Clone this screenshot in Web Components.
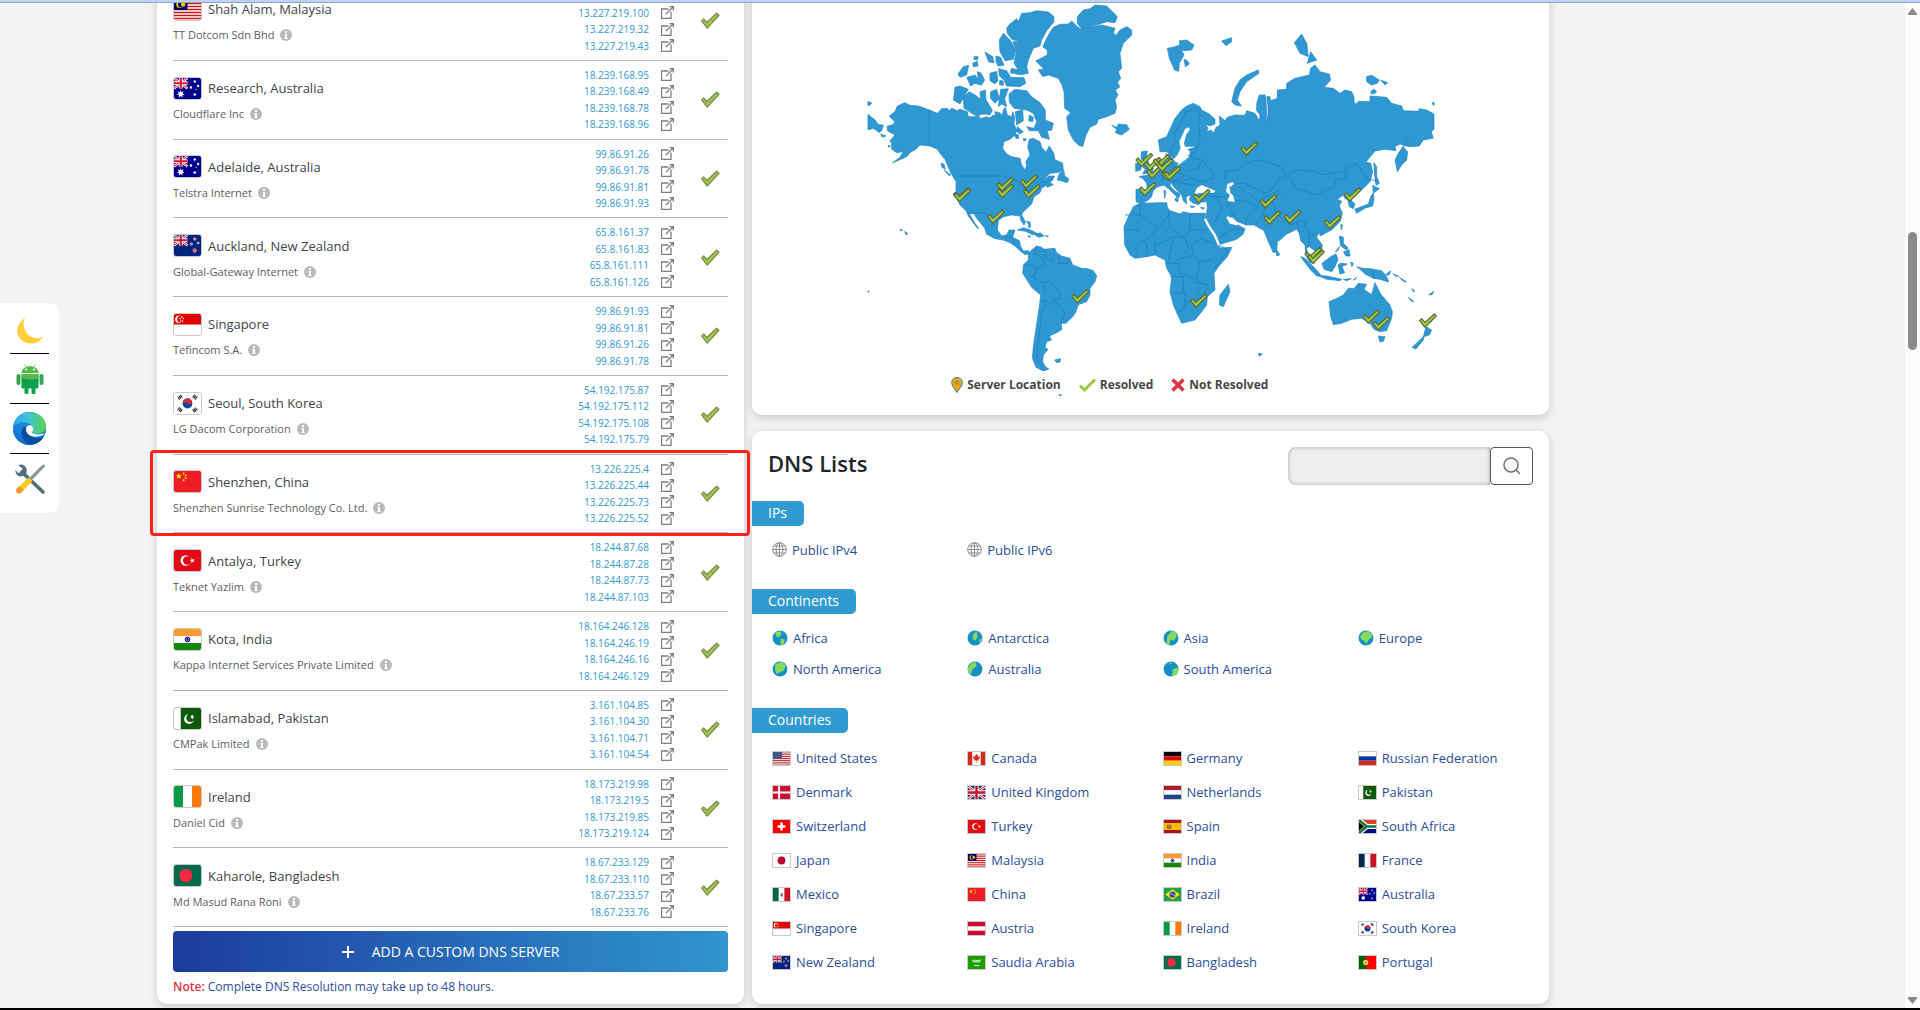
<!DOCTYPE html>
<html lang="en">
<head>
<meta charset="utf-8">
<title>DNS Checker</title>
<style>
html,body{margin:0;height:100%}
body{font-family:"Open Sans","Segoe UI",sans-serif;font-size:13px;color:#3f444a;background:#f3f3f3;overflow:hidden;
--accent:#2f9bd0;--link:#2a4f9b}
</style>
</head>
<body>
<app-frame>
  <tool-dock slot="dock"></tool-dock>
  <app-card class="servers" slot="left" cut><server-list></server-list></app-card>
  <app-card slot="right" cut><world-map></world-map><map-legend></map-legend></app-card>
  <app-card slot="right"><dns-lists></dns-lists></app-card>
</app-frame>
<script>
const F = {
  my:'<rect width="28" height="21" fill="#fff"/><path d="M0 1.5h28M0 4.5h28M0 7.5h28M0 10.5h28M0 13.5h28M0 16.5h28M0 19.5h28" stroke="#cc1414" stroke-width="1.6"/><rect width="14" height="11" fill="#010066"/><circle cx="6" cy="5.500" r="3.600" fill="#fc0"/><circle cx="7.200" cy="5.500" r="2.900" fill="#010066"/><circle cx="9.500" cy="5.500" r="2.200" fill="#fc0"/>',
  au:'<rect width="28" height="21" fill="#00008b"/><path d="M0 0l14 10.500M14 0L0 10.500" stroke="#fff" stroke-width="2.400"/><path d="M0 0l14 10.500M14 0L0 10.500" stroke="#e8112d"/><path d="M7 0v10.500M0 5.250h14" stroke="#fff" stroke-width="4"/><path d="M7 0v10.500M0 5.250h14" stroke="#e8112d" stroke-width="2.200"/><path d="M7 12l.8 2.200 2.200-.9-1 2.200 2 1-2.200.6.2 2.300-2-1.400-2 1.400.2-2.300L3 16.500l2-1-1-2.200 2.200.9z" fill="#fff"/><g fill="#fff"><circle cx="21.500" cy="3.500" r="1.200"/><circle cx="17.500" cy="9.500" r="1.200"/><circle cx="25" cy="8" r="1.200"/><circle cx="21.500" cy="16.500" r="1.300"/><circle cx="23" cy="11.500" r=".6"/></g>',
  nz:'<rect width="28" height="21" fill="#00247d"/><path d="M0 0l14 10.500M14 0L0 10.500" stroke="#fff" stroke-width="2.400"/><path d="M0 0l14 10.500M14 0L0 10.500" stroke="#cc142b"/><path d="M7 0v10.500M0 5.250h14" stroke="#fff" stroke-width="4"/><path d="M7 0v10.500M0 5.250h14" stroke="#cc142b" stroke-width="2.200"/><g fill="#e33a4d" stroke="#fff" stroke-width=".6"><circle cx="21.500" cy="4" r="1.200"/><circle cx="18" cy="9" r="1.200"/><circle cx="25" cy="8" r="1.100"/><circle cx="21.500" cy="15.500" r="1.700"/></g>',
  sg:'<rect width="28" height="21" fill="#fff"/><rect width="28" height="10.500" fill="#e00000"/><circle cx="5" cy="5.200" r="3.800" fill="#fff"/><circle cx="6.600" cy="5.200" r="3.300" fill="#e00000"/><g fill="#fff"><circle cx="8" cy="3" r=".8"/><circle cx="9.800" cy="4.500" r=".8"/><circle cx="6.400" cy="4.500" r=".8"/><circle cx="7" cy="7" r=".8"/><circle cx="9" cy="7" r=".8"/></g>',
  kr:'<rect width="28" height="21" fill="#fff"/><circle cx="14" cy="10.500" r="5" fill="#0047a0"/><path d="M9 10.500a5 5 0 0 1 9.800-1.500c-1 3-3.800 3.200-5 1.500-1.300-1.500-3.800-.8-4.800 0z" fill="#cd2e3a"/><g stroke="#222" stroke-width="3.600" stroke-dasharray="1.100 .5"><path d="M4.500 5.500l3.600-2.700M20 2.800l3.600 2.700M4.500 15.500l3.600 2.700M20 18.200l3.600-2.700"/></g>',
  cn:'<rect width="28" height="21" fill="#ee1c25"/><path d="M5 2l.8 2.300h2.400L6.300 5.700 7 8 5 6.600 3 8l.7-2.300L1.800 4.300h2.400z" fill="#ff0"/><g fill="#ff0"><circle cx="10" cy="2.500" r=".9"/><circle cx="12.200" cy="4.500" r=".9"/><circle cx="12.200" cy="7.200" r=".9"/><circle cx="10" cy="9.200" r=".9"/></g>',
  tr:'<rect width="28" height="21" fill="#e30a17"/><circle cx="12" cy="10.500" r="5.200" fill="#fff"/><circle cx="13.500" cy="10.500" r="4.200" fill="#e30a17"/><path d="M16 10.500l2-.6.1-2.100 1.200 1.700 2-.7-1.200 1.700 1.200 1.700-2-.7-1.200 1.700-.1-2.100z" fill="#fff"/>',
  in:'<rect width="28" height="21" fill="#fff"/><rect width="28" height="7" fill="#f93"/><rect y="14" width="28" height="7" fill="#138808"/><circle cx="14" cy="10.500" r="2.400" fill="#7a7ad0" stroke="#000088"/><circle cx="14" cy="10.500" r=".9" fill="#000088"/>',
  pk:'<rect width="28" height="21" fill="#0c590b"/><rect width="7" height="21" fill="#fff"/><circle cx="15.500" cy="11" r="5" fill="#fff"/><circle cx="17" cy="9.800" r="4.300" fill="#0c590b"/><path d="M17 7l1.500.8 1.300-1.300.1 1.900 1.500.8-1.700.5-.2 1.800-1-1.600-1.700.3 1.100-1.400z" fill="#fff"/>',
  ie:'<rect width="28" height="21" fill="#fff"/><rect width="9.300" height="21" fill="#009a49"/><rect x="18.700" width="9.300" height="21" fill="#ff7900"/>',
  bd:'<rect width="28" height="21" fill="#006a4e"/><circle cx="12.300" cy="10.500" r="6.700" fill="#f42a41"/>',
  us:'<rect width="28" height="21" fill="#fff"/><path d="M0 1.500h28M0 4.500h28M0 7.500h28M0 10.500h28M0 13.500h28M0 16.500h28M0 19.500h28" stroke="#bd3d44" stroke-width="1.700"/><rect width="15" height="10.500" fill="#3a4f80"/><path d="M1 2h13M1 5h13M1 8h13" stroke="#7d8cb2" stroke-dasharray="1 1.400"/>',
  ca:'<rect width="28" height="21" fill="#fff"/><path d="M0 0h7v21H0zM21 0h7v21h-7z" fill="#d52b1e"/><path d="M14 3l1.500 2.500 1.500-.5-.5 3.500 3-1.500.3 1.800-2.600 3.700.6 1.200-3.300-.2V17h-1v-3.500l-3.300.2.600-1.200-2.600-3.700.3-1.800 3 1.500L11 5l1.500.5z" fill="#d52b1e"/>',
  de:'<rect width="28" height="7" fill="#000"/><rect y="7" width="28" height="7" fill="#d00"/><rect y="14" width="28" height="7" fill="#ffce00"/>',
  ru:'<rect width="28" height="7" fill="#fff"/><rect y="7" width="28" height="7" fill="#0039a6"/><rect y="14" width="28" height="7" fill="#d52b1e"/>',
  dk:'<rect width="28" height="21" fill="#c8102e"/><path d="M10 0v21M0 10.500h28" stroke="#fff" stroke-width="3"/>',
  gb:'<rect width="28" height="21" fill="#012169"/><path d="M0 0l28 21M28 0L0 21" stroke="#fff" stroke-width="4.500"/><path d="M0 0l28 21M28 0L0 21" stroke="#c8102e" stroke-width="1.600"/><path d="M14 0v21M0 10.500h28" stroke="#fff" stroke-width="7"/><path d="M14 0v21M0 10.500h28" stroke="#c8102e" stroke-width="4"/>',
  nl:'<rect width="28" height="7" fill="#ae1c28"/><rect y="7" width="28" height="7" fill="#fff"/><rect y="14" width="28" height="7" fill="#21468b"/>',
  ch:'<rect width="28" height="21" fill="#f00"/><path d="M14 4v13M7.500 10.500h13" stroke="#fff" stroke-width="4"/>',
  es:'<rect width="28" height="21" fill="#f1bf00"/><path d="M0 0h28v5H0zM0 16h28v5H0z" fill="#aa151b"/><rect x="5" y="7.500" width="7" height="6.500" rx="1.500" fill="#ad4a24"/><rect x="7" y="9" width="3" height="3" fill="#c98a86"/>',
  za:'<rect width="28" height="10.500" fill="#e23d28"/><rect y="10.500" width="28" height="10.500" fill="#000c8a"/><path d="M0 0l13 10.500L0 21M13 10.500h15" fill="none" stroke="#fff" stroke-width="8"/><path d="M0 0v21l12-10.500z" fill="#ffb915"/><path d="M0 3.500v14l8-7z" fill="#000"/><path d="M0 0l13 10.500L0 21M12 10.500h16" fill="none" stroke="#007847" stroke-width="4"/>',
  jp:'<rect width="28" height="21" fill="#fff"/><circle cx="14" cy="10.500" r="6.300" fill="#bc002d"/>',
  fr:'<rect width="28" height="21" fill="#fff"/><rect width="9.300" height="21" fill="#002654"/><rect x="18.700" width="9.300" height="21" fill="#ce1126"/>',
  mx:'<rect width="28" height="21" fill="#fff"/><rect width="9.300" height="21" fill="#006847"/><rect x="18.700" width="9.300" height="21" fill="#ce1126"/><path d="M12 12l2-4 2.500 1-.5 4-2 1.500z" fill="#8a6a35"/>',
  br:'<rect width="28" height="21" fill="#229e45"/><path d="M14 2l12 8.500L14 19 2 10.500z" fill="#f8e509"/><circle cx="14" cy="10.500" r="5" fill="#2b49a3"/><path d="M9.500 9q5 0 9 4" fill="none" stroke="#fff"/>',
  at:'<rect width="28" height="21" fill="#c8102e"/><rect y="7" width="28" height="7" fill="#fff"/>',
  sa:'<rect width="28" height="21" fill="#199d00"/><path d="M7 6.500l2 2 1.500-2.500 2 2.500 1.500-2 1.500 2 2-2.500 1.500 2.500 2-2.500M8 9.500h12M10 15.500h9" stroke="#fff" stroke-width="1.400" fill="none"/>',
  pt:'<rect width="28" height="21" fill="#f00"/><rect width="11.200" height="21" fill="#060"/><circle cx="11" cy="10.500" r="4.300" fill="#f4d21c"/><circle cx="11" cy="10.500" r="2.200" fill="#e23b3b" stroke="#fff"/>'
};
const CHECK = w => `<svg class="check" width="${w}" height="${Math.round(w*.8)}" viewBox="-26 -21 52 42" aria-hidden="true"><path d="M-22 1l5-5 8 9 24-23 6 5L-8 19z" fill="#9fc64c" stroke="#7d8a4e" stroke-width="3" stroke-linejoin="round"/></svg>`;

class Base extends HTMLElement{
  connectedCallback(){
    if(this.shadowRoot) return;
    const t=document.createElement('template');
    t.innerHTML=this.render();
    this.attachShadow({mode:'open'}).append(t.content.cloneNode(true));
  }
}

customElements.define('app-frame', class extends Base{render(){return `<style>
:host{display:flex;flex-direction:column;height:100vh}
.edge{flex:none;height:2px;background:#bfd4f4;border-bottom:1px solid #8fa5c4}
.view{flex:1;min-height:0;display:flex;overflow:hidden;border-bottom:2px solid #000;background:#f3f3f3}
.page{flex:1;min-width:0;overflow:hidden}
main{display:grid;grid-template-columns:587fr 797fr;gap:8px;margin:-21px 356px 0 157px}
.right{display:flex;flex-direction:column;gap:16px;min-width:0}
.left{display:flex;flex-direction:column;min-width:0}
.left ::slotted(*){flex:1}
.bar{flex:none;width:15px;background:#fcfcfc;display:flex;flex-direction:column;align-items:center;padding:5px 0 4px;box-sizing:border-box}
.thumb{width:9px;height:118px;border-radius:5px;background:#8b8b8b}
.before{flex:217}.after{flex:647}
</style><div class="edge"></div><div class="view"><div class="page"><main><div class="left"><slot name="left"></slot></div><div class="right"><slot name="right"></slot></div></main></div>
<div class="bar" aria-hidden="true"><svg width="9" height="7"><path d="M4.500 0L9 5.500V7H0V5.500z" fill="#8b8b8b"/></svg><div class="before"></div><div class="thumb"></div><div class="after"></div><svg width="9" height="7"><path d="M4.500 7L9 1.500V0H0v1.500z" fill="#8b8b8b"/></svg></div></div><slot name="dock"></slot>`}});

customElements.define('tool-dock', class extends Base{render(){return `<style>
:host{position:fixed;left:0;top:30%}
nav{width:59px;box-sizing:border-box;padding:1px 10px 9px;background:#fff;border-radius:0 10px 10px 0}
button,a{display:flex;align-items:center;justify-content:center;width:100%;height:50px;box-sizing:border-box;padding:0;border:0;border-bottom:1px solid #000;background:none}
nav>:last-child{border-bottom:0}
svg{display:block}
</style><nav aria-label="Tools">
<button aria-label="Dark mode"><svg width="26" height="30" viewBox="0 -4 26 30"><path d="M8 0C0 5-2 14 3 20.500 9 28 21 27 26 19 19 22 12 19 9 14 6 9 6 4 8 0z" fill="#ffcf3a"/></svg></button>
<a href="#" aria-label="Android app"><svg width="28" height="30" viewBox="0 0 28 30"><path d="M8.500.5l2 3M19.500.5l-2 3" stroke="#7cc576"/><path d="M5.500 9C5.500 0 22.500 0 22.500 9z" fill="#55b949"/><circle cx="10" cy="5.500" r="1" fill="#fff"/><circle cx="18" cy="5.500" r="1" fill="#fff"/><path d="M5.500 10h17v13q0 1.500-1.500 1.500H7q-1.500 0-1.500-1.500z" fill="#0d9f4b"/><path d="M5.500 10h17v4q-8 3.500-17 0z" fill="#55b949"/><rect x=".5" y="10" width="4" height="11" rx="2" fill="#2fa84c"/><rect x="23.500" y="10" width="4" height="11" rx="2" fill="#2fa84c"/><rect x="8.500" y="23" width="4" height="7" rx="1.500" fill="#0d9f4b"/><rect x="15.500" y="23" width="4" height="7" rx="1.500" fill="#0d9f4b"/></svg></a>
<a href="#" aria-label="Edge extension"><svg width="33" height="33" viewBox="0 0 33 33"><defs><linearGradient id="a" x1="0" x2="1"><stop offset="0" stop-color="#2fa8ee"/><stop offset=".45" stop-color="#3fc4dc"/><stop offset="1" stop-color="#58d443"/></linearGradient><linearGradient id="b" x2="0" y2="1"><stop stop-color="#1b86de"/><stop offset="1" stop-color="#0f6ccb"/></linearGradient></defs><circle cx="16.500" cy="16.500" r="16.500" fill="#0c79d8"/><path d="M.3 14C2 5 9 0 17 0c9 0 16 6.500 16 14 0 6-5 8-9.500 8-3.500 0-5.500-1.500-4.500-3 3-4-.5-7-6-7.500C7 11 2 13 .3 14z" fill="url(#a)"/><path d="M0 17C1 12 6 10 12 10.500c5 .5 7 2 7 4-2-2-5-2-6.500 0C8 20 12 30 20 32.500 12 34.500 0 29 0 17z" fill="url(#b)"/><path d="M10.500 15c-4 5-1.500 14 6 17.500 6 .5 12-3 14-8-5 3-12 1.500-15-3-1.500-2.500-1.500-4.500-1-6.500z" fill="#0a4f9f"/><path d="M16.500 13a4.500 4.500 0 0 0-3.500 5c.6 4 4.500 6.700 9 6.700 3.500 0 7-1.200 9-2.200.5-.8 0-1.200-.8-1-4 1.500-9 1-10.700-.2-1-.8-.3-1.800.3-2.800 1.200-2.500-.8-5.500-3.300-5.500z" fill="#fff"/></svg></a>
<a href="#" aria-label="Tools"><svg width="30" height="30" viewBox="0 0 30 30"><path d="M7 8l21 20" stroke="#546e7a" stroke-width="3.600" stroke-linecap="round"/><path d="M3.500 1.500l4 3-1 3.500-3.500 1-2.500-3C0 12 6 14 10 11 14 7 11 0 5 .5z" fill="#546e7a"/><path d="M29 1l-3 1-12 12 2.500 2.500L28 4.500z" fill="#9aa6a8"/><path d="M29.500 1L16 15" stroke="#8c999c" stroke-width="2.500"/><path d="M13.500 13.500l4 3.500L5.500 29q-2 1-3.500-.5T1.500 25z" fill="#ffc81f"/><path d="M4 22l5 4-4 3.500q-3 .5-4-2L1.500 25z" fill="#f39a2a"/></svg></a>
</nav>`}});

customElements.define('app-card', class extends Base{render(){return `<style>
:host{display:flex;flex-direction:column;background:#fff;border-radius:10px;box-shadow:0 3px 8px rgba(0,0,0,.17)}
:host([cut]){border-radius:0 0 10px 10px}
::slotted(server-list){flex:1}
</style><slot></slot>`}});

customElements.define('flag-icon', class extends Base{render(){return `<style>
:host{display:block;flex:none;box-sizing:border-box;border:1px solid #c9c9c9;width:19px;height:15px}
:host([large]){width:29px;height:23px;border-radius:3px;overflow:hidden}
svg{display:block;width:100%;height:100%}
</style><svg viewBox="0 0 28 21" preserveAspectRatio="none" aria-hidden="true">${F[this.getAttribute('code')]}</svg>`}});

customElements.define('server-row', class extends Base{render(){
const ips=this.getAttribute('ips').split(' ');
return `<style>
:host{display:flex;position:relative;box-sizing:border-box;border-bottom:1px solid #b5b8ba;padding:6px 0}
:host([marked])::after{content:"";position:absolute;inset:-5px -22px -4px -23px;border:3px solid #fd2219;border-radius:4px;z-index:1;pointer-events:none}
.who{flex:1;min-width:0;display:flex;flex-direction:column;justify-content:center;gap:3px;padding-top:1px}
.place,.org{display:flex;align-items:center;margin:0;font-weight:400}
.place{gap:6px;font-size:13px;line-height:24px}
.org{gap:6px;font-size:11px;line-height:20px;padding-top:1px;color:#5c6066}
ul{list-style:none;margin:0;padding:0;display:grid;grid-template-rows:repeat(4,1fr)}
li{display:flex;align-items:center;justify-content:flex-end;gap:12px;line-height:16px;font-size:10px}
li:nth-last-child(4){grid-row:1}
li:nth-last-child(3){grid-row:2}
li:nth-last-child(2){grid-row:3}
li:last-child{grid-row:4}
a{color:var(--accent);text-decoration:none}
svg{display:block}
.state{flex:none;width:54px;display:flex;align-items:center;justify-content:center}
.state .check{margin-left:18px}
</style><div class="who"><h3 class="place"><flag-icon large code="${this.getAttribute('flag')}"></flag-icon><span><slot></slot></span></h3>
<p class="org"><span>${this.getAttribute('org')}</span><svg width="12" height="12" viewBox="0 0 12 12"><circle cx="6" cy="6" r="6" fill="#bababa"/><path d="M5 2h2v2H5zM4.500 5H7v4h.8v1H4.300V9H5V6h-.5z" fill="#fff"/></svg></p></div>
<ul>${ips.map(i=>`<li><a href="#">${i}</a><a href="#" aria-label="Open ${i}"><svg width="13" height="13" viewBox="0 0 13 13" fill="none" stroke="#7b7f83"><path d="M7.500 3h-7v9.500h9.500v-7" stroke-width="1.300"/><path d="M5 8l7-7M8.500.7h3.800v3.800" stroke-width="1.300"/></svg></a></li>`).join('')}</ul><div class="state">${CHECK(21)}</div>`}});

customElements.define('server-list', class extends Base{render(){
const rows=[['my','Shah Alam, Malaysia','TT Dotcom Sdn Bhd','13.227.219.100 13.227.219.32 13.227.219.43'],
['au','Research, Australia','Cloudflare Inc','18.239.168.95 18.239.168.49 18.239.168.78 18.239.168.96'],
['au','Adelaide, Australia','Telstra Internet','99.86.91.26 99.86.91.78 99.86.91.81 99.86.91.93'],
['nz','Auckland, New Zealand','Global-Gateway Internet','65.8.161.37 65.8.161.83 65.8.161.111 65.8.161.126'],
['sg','Singapore','Tefincom S.A.','99.86.91.93 99.86.91.81 99.86.91.26 99.86.91.78'],
['kr','Seoul, South Korea','LG Dacom Corporation','54.192.175.87 54.192.175.112 54.192.175.108 54.192.175.79'],
['cn','Shenzhen, China','Shenzhen Sunrise Technology Co. Ltd.','13.226.225.4 13.226.225.44 13.226.225.73 13.226.225.52'],
['tr','Antalya, Turkey','Teknet Yazlim','18.244.87.68 18.244.87.28 18.244.87.73 18.244.87.103'],
['in','Kota, India','Kappa Internet Services Private Limited','18.164.246.128 18.164.246.19 18.164.246.16 18.164.246.129'],
['pk','Islamabad, Pakistan','CMPak Limited','3.161.104.85 3.161.104.30 3.161.104.71 3.161.104.54'],
['ie','Ireland','Daniel Cid','18.173.219.98 18.173.219.5 18.173.219.85 18.173.219.124'],
['bd','Kaharole, Bangladesh','Md Masud Rana Roni','18.67.233.129 18.67.233.110 18.67.233.57 18.67.233.76']];
return `<style>
:host{display:flex;flex-direction:column;padding:0 16px}
.rows{flex:1;display:grid;grid-auto-rows:1fr}
button{flex:none;height:41px;margin:4px 0 0;border:0;border-radius:4px;background:linear-gradient(90deg,#1d3b9f,#2f95cd);color:#fff;font:14px "Open Sans",sans-serif;display:flex;align-items:center;justify-content:center;gap:18px}
p{margin:5px 0 7px;line-height:20px;font-size:12px;color:var(--link)}
b{color:#dc3545;font-weight:600}
</style><div class="rows">${rows.map(r=>`<server-row flag="${r[0]}" org="${r[2]}" ips="${r[3]}"${r[0]=='cn'?' marked':''}>${r[1]}</server-row>`).join('')}</div>
<button><svg width="12" height="12" viewBox="0 0 12 12"><path d="M6 0v12M0 6h12" stroke="#fff" stroke-width="2"/></svg>ADD A CUSTOM DNS SERVER</button>
<p><b>Note:</b> Complete DNS Resolution may take up to 48 hours.</p>`}});

customElements.define('world-map', class extends Base{render(){
const P=a=>a.map(s=>`M${s}z`).join('');
const west=P(['135,308 150,316 175,318 208,330 232,340 245,326 262,325 268,332 275,324 290,332 300,328 322,335 325,350 345,350 355,344 362,356 380,350 388,354 400,345 415,348 422,340 426,350 430,330 436,322 442,345 455,350 458,335 464,352 462,372 470,390 465,405 450,418 432,425 428,445 440,462 455,470 480,475 485,495 495,510 500,495 497,485 510,465 503,440 508,418 520,415 540,425 545,442 558,457 568,438 582,462 584,478 608,490 610,512 590,518 570,520 548,542 568,528 584,528 578,540 570,548 580,554 562,562 558,556 545,565 540,578 522,590 515,612 490,635 485,645 496,665 492,676 482,660 480,648 455,645 430,650 415,662 412,690 425,708 440,705 447,690 465,690 458,712 478,722 482,740 490,753 505,752 512,760 495,764 480,752 465,738 450,728 430,720 405,716 380,703 374,684 350,655 342,641 328,641 345,670 357,686 350,682 325,648 318,632 300,615 288,590 288,545 272,518 262,495 255,478 240,460 232,448 210,438 180,435 165,450 152,456 140,470 97,489 120,472 130,455 110,458 95,448 95,430 90,422 105,405 82,392 82,378 98,374 105,366 88,348 105,335 112,318',
'668,440 655,435 640,420 625,390 620,350 632,338 614,325 612,275 606,255 595,235 565,225 548,230 535,210 552,207 527,183 562,165 562,150 548,140 565,105 580,82 600,73 625,72 635,63 650,78 662,88 725,75 765,85 760,100 768,106 780,90 800,80 815,90 815,105 790,130 780,160 785,205 775,215 782,235 772,248 780,260 766,270 774,285 765,300 770,320 765,340 740,350 715,358 710,372 690,382 678,405',
'665,88 652,70 652,50 670,30 690,26 705,15 740,18 750,28 772,50 765,68 740,65 700,78','440,85 450,72 470,56 475,66 485,40 510,38 530,32 565,36 582,50 582,65 560,92 545,120 540,138 520,145 505,180 500,200 505,220 480,224 450,218 455,205 475,210 462,190 470,150 458,125 482,126 455,118 442,100','418,120 430,100 450,120 468,150 460,178 435,182 420,155',
'285,262 300,258 325,268 300,312 280,300','310,292 328,275 345,285 362,298 360,275 376,270 378,300 397,330 390,345 375,342 345,346 312,325','392,275 410,268 418,296 405,310 392,295','422,268 445,266 434,296 440,320 425,312 415,320','447,282 465,268 500,272 515,290 540,308 556,330 556,360 580,370 575,390 562,392 568,418 545,412 535,392 508,392 500,380 522,385 530,365 520,340 500,330 462,325 448,306','466,335 488,330 490,362 470,375','508,345 520,352 518,365 506,362','472,380 490,395 480,402 470,395','462,402 475,404 476,415 468,415','490,415 500,418 492,424','404,335 420,338 418,350 408,350','294,222 310,200 326,196 320,225 300,232','320,232 345,225 355,238 352,215 362,218 374,240 364,256 345,250 332,258','390,220 410,214 414,242 405,252 390,242','416,206 440,212 452,232 492,233 497,250 480,260 440,258 432,240 418,228','375,156 398,170 402,188 386,186','408,168 422,172 432,196 414,198 408,184','342,170 355,170 352,180 342,178','338,190 352,184 354,198 340,200','420,240 430,244 430,256 418,254','755,376 770,382 775,372 800,374 808,388 785,405 766,398 770,388','24,343 45,360 56,374 70,375 66,390 58,398 40,385 24,390','24,304 36,310 24,318','62,402 78,408 66,411','243,490 252,492 256,508 246,502','252,510 272,524 268,528','598,520 612,512 614,528 626,536 622,548 605,543 592,540','120,688 128,690 122,693','134,694 144,702 138,704','84,436 92,438 86,442','24,872 28,874 24,877','472,690 490,683 512,690 535,702 518,704 496,694','526,706 540,698 553,708 538,712','556,707 565,708 563,711','504,707 513,709 507,712','500,664 510,666 512,680 506,684 506,674','584,1080 602,1076 600,1086 590,1088','596,1184 604,1184 602,1188',
'505,762 515,750 530,738 545,742 552,748 585,745 590,758 605,768 630,775 638,795 665,805 682,806 700,812 710,828 705,845 690,865 690,885 680,905 655,914 648,935 640,948 618,970 603,970 606,988 590,998 568,1008 574,1020 560,1025 555,1042 564,1048 550,1065 548,1085 556,1100 567,1107 550,1113 528,1102 517,1075 520,1040 528,985 538,920 542,885 515,862 488,820 490,795 505,780']);
const wl='M208 330v108M290 528h138l40 12 30 30 25-5 20-18 25 0M325 638l50 0 20 20 20 12M440 705l-5 12M455 712l10 20M530 738l-5 20 20 15 10 20-25 15-10 25 30 15 5 35M545 848l28-5 25 35 5 15-20 10-5 10-20-10-15 0M552 748l5 30 20 5 5-20M600 768l-5 22 25 0 5-12M495 795l20 0 15 10M560 905l-15 30-5 50-8 50 0 50 20 15M580 900l30 30 5 10-12 30';
const east=P(['55,420 80,410 105,355 125,330 140,318 160,310 180,320 185,330 208,342 225,358 225,372 210,378 197,373 204,385 200,395 212,390 222,398 228,382 240,376 238,348 255,362 262,352 285,345 315,346 320,332 345,340 358,362 360,345 350,332 350,310 358,285 375,285 378,300 380,345 375,372 384,345 384,318 380,290 390,290 392,302 412,295 412,270 440,268 440,250 465,235 508,225 512,205 525,195 540,215 568,222 572,240 552,262 580,265 600,280 615,270 635,275 642,290 642,308 650,312 655,304 690,305 690,288 740,292 755,310 785,318 790,332 835,334 838,326 860,330 882,342 882,388 874,395 880,415 850,420 838,438 808,440 780,432 765,440 768,452 735,448 705,453 678,486 692,490 698,515 690,545 665,570 645,583 632,600 645,612 640,626 628,620 624,600 614,595 610,585 592,598 605,604 598,618 607,640 600,665 575,690 558,698 545,706 535,700 530,712 547,735 545,748 530,756 508,740 500,745 505,770 524,790 510,788 497,765 495,735 482,722 478,700 470,688 455,695 440,702 420,720 412,725 410,755 400,758 385,725 375,700 370,690 358,685 345,675 318,675 290,664 278,652 262,650 270,668 288,672 315,686 310,702 290,718 237,734 225,705 205,675 195,655 200,640 202,620 200,605 185,606 175,614 160,610 148,600 152,585 138,590 140,612 130,602 125,585 108,568 98,556 92,545 90,558 108,575 120,582 118,592 104,600 110,590 90,570 72,555 50,562 38,575 35,590 25,600 5,612 -12,605 -12,568 22,570 20,550 8,535 -3,530 20,526 40,515 55,500 70,480 85,482 80,470 88,462 95,478 115,485 110,500 150,470 120,455 100,478 92,465 80,455 60,455',
'802,420 808,424 790,442 803,455 800,480 785,495 772,515 765,480 775,460','5,455 22,453 20,468 26,490 40,505 36,518 8,522 16,508 8,502 13,488 3,475','-13,490 5,490 2,510 -13,514','82,620 80,608 60,608 0,610 -20,620 -35,650 -48,680 -46,735 -30,765 -15,775 20,770 45,765 75,780 80,805 95,830 90,875 100,915 118,955 125,970 165,960 185,935 200,915 202,890 225,870 222,820 235,800 262,770 276,742 240,744 230,725 205,680 193,650 197,640 150,640 130,635 120,642 85,630','265,853 270,875 250,920 238,915 240,885','275,305 285,265 300,240 320,225 355,210 357,220 320,245 300,275 292,300 304,318 285,315','82,145 105,140 118,135 132,165 118,190 116,214 104,210 88,175','118,122 140,120 162,135 155,150 130,152 120,140','132,178 142,182 148,192 136,200','245,123 275,113 275,125 258,137','485,102 500,130 505,170 480,160 463,128','512,155 530,180 502,190','680,230 695,226 718,240 712,250 694,255 680,245','722,240 743,248 735,255','692,275 700,268 710,274 705,280 694,282','876,310 882,306 882,317','702,488 710,500 710,530 718,550 708,556 703,520','698,556 718,566 700,580 702,598 698,618 676,624 650,640 644,628 685,612 692,590 700,578','603,672 608,676 603,690','540,697 552,700 540,708','598,708 610,712 610,730 625,745 620,750 602,738','610,755 628,750 630,768 618,768','586,756 598,740 595,750','546,790 572,770 588,762 594,778 585,800 575,815 552,808','594,795 602,790 622,792 606,800 614,818 600,822','482,770 495,775 530,810 542,825 530,828 510,808','530,826 560,828 605,838 600,842 560,838','610,838 634,836 620,842','640,840 650,832 646,838','632,786 640,790 636,800','650,800 668,805 690,806 725,812 740,830 746,846 720,838 700,835 675,822 665,812','735,826 752,812 748,824','758,822 775,828 770,830','778,832 800,846 790,844','408,748 420,764 410,768','805,892 822,905 814,904','866,884 882,874 876,884','815,866 824,873 820,875','567,905 585,898 610,885 625,865 642,866 655,850 680,853 672,868 695,884 705,848 722,882 750,915 757,935 755,955 740,992 720,995 702,988 690,970 665,955 635,958 605,970 580,974 572,950','715,1008 735,1010 730,1024 720,1026','858,980 875,990 868,1005 850,1010','852,1008 850,1020 828,1047 816,1042 840,1020','355,1060 367,1062 358,1069','72,570 78,575 74,595','105,600 116,598 112,606','150,618 165,620 155,623','182,622 194,624 186,628','78,460 82,472 76,480']);
const sea=P(['145,382 135,388 118,425 122,445 110,470 98,480 112,488 132,470 148,465 150,455 142,448 166,440 135,440 132,430 138,405 150,388','170,565 185,555 200,562 226,572 222,578 195,578 175,580 162,584','278,546 262,552 258,575 270,585 262,602 284,606 280,588 272,580 268,562 282,552']);
const el='M90 480l0-20 15-40 0-20 25-50 10-20M130 330l20 5 10-15 20 15-5 30 5 50-10 35M172 440l-20 30M150 470l35 10 35 40 0 15-35 10-30-10-35 10M185 480l-10 25-40 10M95 485l5 30 35 10-35 20-25-10-15-5M60 500l15 20-10 25M100 545l60 10 15-8M255 540l0-25 40-5 20-20 40-10 40 10 25 10 20 25-25 15-20 30-20 10-30-15-35-15-20 0M445 525l25-15 50 5 30 10 50-10 25 5M445 530l25 35 60 20 50-25 10-20 30-5-5-30 35-15 30 45 35 10M295 560l30 20 40 30 40-15 20-20M280 600l45 5 30 15-35 35-2 20M365 610l10 20-30 50M400 610l10 30 40 35 40-15 10 10M470 665l10 35M490 665l20 40 15 0 10-10M510 700l-5 35M205 590l50 0 20 50 30 25M235 600l10 30-25 45M240 710l35-20 35 0M0 610l0 35-45 0M0 645l55 40-30 30-35 20M55 685l35-45M85 625l5 60 40 25 20-20 50 0M150 640v50M40 740l60-30 35 5 10 30M100 720l-15 60M45 765l0-40M110 780l50-15 20 20 40-5M160 765l-5-30 30-20M180 715l45 15 40 20-40 55M80 790l35 0 5 30 50 20 10-60M90 830l40 0 0 50-40 0M135 875l0 45-25 20M165 845l40 10-15 35-55 20M185 890l-20-20M20 770l0-40M0 690l-48 0M160 570l25 8 40 5 10 20M360 600l60-30M-15 740l10 30M700 808v28';
const pts=[[-535,583],[-533,585],[-405,553],[-404,573],[-333,545],[-325,574],[-432,650],[-179,889],[13,480],[38,492],[45,515],[65,483],[75,495],[90,520],[97,520],[23,567],[185,588],[328,446],[385,604],[397,653],[458,650],[578,666],[638,584],[520,762],[528,770],[177,902],[694,950],[724,970],[864,962]];
return `<style>:host{display:block}svg{display:block;width:100%;overflow:visible}</style>
<svg viewBox="752 -18 797 393" role="img" aria-label="World map of DNS servers">
<g transform="translate(860 0) scale(.33333)" stroke-linejoin="round"><path d="${west}" fill="#2f98d0" stroke="#2387c8" stroke-width="2"/><path d="${wl}" fill="none" stroke="#1f80c4" stroke-width="2.500"/></g>
<g transform="translate(1140 0) scale(.33333)" stroke-linejoin="round"><path d="${east}" fill="#2f98d0" stroke="#2387c8" stroke-width="2"/><path d="${el}" fill="none" stroke="#1f80c4" stroke-width="2.500"/><path d="${sea}" fill="#fff"/><path d="M195 656l12 24 18 26 12 30M262 650l10 18 20 5" stroke="#fff" stroke-width="7" fill="none"/>
${pts.map(p=>`<path d="M${p[0]-25} ${p[1]}l6-6 10 11 28-25 6 6-34 34z" fill="#9ccb3f" stroke="#5d673b" stroke-width="3.500"/>`).join('')}</g></svg>`}});

customElements.define('map-legend', class extends Base{render(){return `<style>
:host{display:flex;padding:0 0 20px 25%;font-weight:700;font-size:12px;line-height:20px;color:#484848}
span{display:flex;align-items:center;gap:4px;margin-right:18px}
svg{display:block}
</style><span><svg width="12" height="16" viewBox="0 0 12 16"><path d="M6 15.500C4 12 .7 9 .7 5.500a5.300 5 0 0 1 10.600 0C11.300 9 8 12 6 15.500z" fill="#ffa500" stroke="#2a7ea6"/><circle cx="6" cy="5.500" r="1.600" fill="#b8b15a" stroke="#5d8a7c"/></svg>Server Location</span>
<span><svg width="17" height="14" viewBox="0 0 17 14"><path d="M1 7.500l4.500 4.500L16 1.500" fill="none" stroke="#9ccb3f" stroke-width="3"/></svg>Resolved</span>
<span><svg width="14" height="14" viewBox="0 0 14 14"><path d="M1.500 1.500l11 11M12.500 1.500l-11 11" stroke="#dc3545" stroke-width="3.500"/></svg>Not Resolved</span>`}});

customElements.define('search-box', class extends Base{render(){return `<style>
:host{display:flex;width:245px;height:38px}
input{flex:1;min-width:0;box-sizing:border-box;border:0;border-radius:8px 0 0 8px;background:#eee;box-shadow:inset 0 0 4px rgba(0,0,0,.3);padding:0 12px;font:13px "Open Sans",sans-serif}
button{width:43px;padding:0;border:1px solid #555;border-radius:4px;background:#fff;display:flex;align-items:center;justify-content:center}
</style><input type="search" aria-label="Search DNS lists"><button aria-label="Search"><svg width="18" height="18" viewBox="0 0 18 18" fill="none" stroke="#6c757d" stroke-width="1.500"><circle cx="8" cy="8" r="7"/><path d="M12.800 12.800l4.200 4.200"/></svg></button>`}});

const BLOBS=['M3 2l5-1 1 3-3 3-2-1zM8 8l4 1-1 4-3 2z','M6 4l3-3 1 5-2 4-3-2zM11 9l3-1-2 5z','M3 13l1-7 4-5 4 1 1 4-3 4-3-1-1 5z','M2 6l3-4 5-1 3 3v3l-3 2-2 4-2-3-3-1z','M3 3l6-2 4 3-2 5-4 2-3 1-1-4z','M1 6l3-4 4-1 1 4-4 3-1 5-3-3z','M9 8l4-2 2 2-2 5-5 2 1-4zM5 1l4 1-2 1z'];
customElements.define('link-group', class extends Base{render(){
const kind=this.getAttribute('kind');
const icon=(x,i)=>kind=='flag'?`<flag-icon code="${x[0]}"></flag-icon>`:kind=='globe'?`<svg width="15" height="15" viewBox="0 0 15 15" fill="none" stroke="#8c8f92"><circle cx="7.500" cy="7.500" r="6.800"/><ellipse cx="7.500" cy="7.500" rx="3.400" ry="6.800"/><path d="M7.500.5v14M.5 7.500h14M1.500 4h12M1.500 11h12"/></svg>`:`<svg width="16" height="16" viewBox="0 0 15 15"><circle cx="7.500" cy="7.500" r="7" fill="#1590c6"/><path d="${BLOBS[i]}" fill="#86d95c"/></svg>`;
return `<style>
:host{display:block}
h3{display:table;margin:0;padding:0 17px 0 16px;height:25px;line-height:24px;font-size:14px;font-weight:400;color:#fff;background:var(--accent);border-radius:0 5px 5px 0}
ul{list-style:none;margin:8px 8px 24px;padding:0;display:grid;grid-template-columns:repeat(4,1fr)}
li{padding-left:12px;height:31px;display:flex;align-items:center}
.flag li{height:34px}
a{display:flex;align-items:center;gap:5px;color:var(--link);text-decoration:none;font-size:13px;line-height:18px}
svg{display:block}
</style><h3><slot></slot></h3><ul class="${kind}">${JSON.parse(this.getAttribute('items')).map((x,i)=>`<li><a href="#">${icon(x,i)}<span>${kind=='flag'?x[1]:x}</span></a></li>`).join('')}</ul>`}});

customElements.define('dns-lists', class extends Base{render(){
const g=(t,k,a)=>`<link-group kind="${k}" items='${JSON.stringify(a)}'>${t}</link-group>`;
return `<style>
:host{display:block;padding-bottom:1px}
header{display:flex;justify-content:space-between;align-items:flex-start;padding:16px}
h2{margin:0;font-size:22px;line-height:32px;font-weight:600;color:#212529}
</style><header><h2>DNS Lists</h2><search-box></search-box></header>
${g('IPs','globe',['Public IPv4','Public IPv6'])}
${g('Continents','earth',['Africa','Antarctica','Asia','Europe','North America','Australia','South America'])}
${g('Countries','flag',[['us','United States'],['ca','Canada'],['de','Germany'],['ru','Russian Federation'],['dk','Denmark'],['gb','United Kingdom'],['nl','Netherlands'],['pk','Pakistan'],['ch','Switzerland'],['tr','Turkey'],['es','Spain'],['za','South Africa'],['jp','Japan'],['my','Malaysia'],['in','India'],['fr','France'],['mx','Mexico'],['cn','China'],['br','Brazil'],['au','Australia'],['sg','Singapore'],['at','Austria'],['ie','Ireland'],['kr','South Korea'],['nz','New Zealand'],['sa','Saudia Arabia'],['bd','Bangladesh'],['pt','Portugal']])}`}});
</script>
</body>
</html>
